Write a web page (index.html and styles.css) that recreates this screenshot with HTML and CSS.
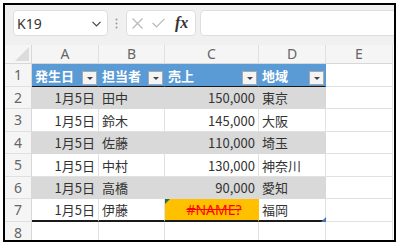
FILE: index.html
```html
<!DOCTYPE html>
<html>
<head>
<title>K19</title>
<link rel="stylesheet" href="styles.css">
</head>
<body>
<div class="frame">
  <div class="fbar">
    <div class="namebox">
      <span class="ref">K19</span>
      <svg class="chev" width="9" height="6" viewBox="0 0 9 6"><polyline points="0.5,0.8 4.5,4.8 8.5,0.8" fill="none" stroke="#444" stroke-width="1.2"/></svg>
    </div>
    <svg class="grip" width="3" height="11" viewBox="0 0 3 11"><circle cx="1.5" cy="1.5" r="1" fill="#999"/><circle cx="1.5" cy="5.5" r="1" fill="#999"/><circle cx="1.5" cy="9.5" r="1" fill="#999"/></svg>
    <div class="fxbox">
      <svg width="11" height="11" viewBox="0 0 11 11"><path d="M0.5 0.5L10.5 10.5M10.5 0.5L0.5 10.5" stroke="#b8b8b8" stroke-width="1.2"/></svg>
      <svg width="13" height="10" viewBox="0 0 13 10"><polyline points="0.5,5 4.5,9 12.5,0.8" fill="none" stroke="#b8b8b8" stroke-width="1.2"/></svg>
      <span class="fx">fx</span>
    </div>
    <div class="input"></div>
  </div>

  <div class="sheet">
    <div class="corner"><span class="tri"></span></div>
    <div class="ch">A</div><div class="ch">B</div><div class="ch">C</div><div class="ch">D</div><div class="ch">E</div>

    <div class="rh">1</div>
    <div class="c th">発生日<span class="btn"></span></div>
    <div class="c th">担当者<span class="btn"></span></div>
    <div class="c th">売上<span class="btn"></span></div>
    <div class="c th">地域<span class="btn"></span></div>
    <div class="c"></div>

    <div class="rh">2</div>
    <div class="c band r">1月5日</div><div class="c band">田中</div><div class="c band r">150,000</div><div class="c band">東京</div><div class="c"></div>

    <div class="rh">3</div>
    <div class="c r">1月5日</div><div class="c">鈴木</div><div class="c r">145,000</div><div class="c">大阪</div><div class="c"></div>

    <div class="rh">4</div>
    <div class="c band r">1月5日</div><div class="c band">佐藤</div><div class="c band r">110,000</div><div class="c band">埼玉</div><div class="c"></div>

    <div class="rh">5</div>
    <div class="c r">1月5日</div><div class="c">中村</div><div class="c r">130,000</div><div class="c">神奈川</div><div class="c"></div>

    <div class="rh">6</div>
    <div class="c band r">1月5日</div><div class="c band">高橋</div><div class="c band r">90,000</div><div class="c band">愛知</div><div class="c"></div>

    <div class="rh">7</div>
    <div class="c last r">1月5日</div><div class="c last">伊藤</div><div class="c last err"><span class="flag"></span>#NAME?</div><div class="c last">福岡<span class="grab"></span></div><div class="c"></div>

    <div class="rh">8</div>
    <div class="c"></div><div class="c"></div><div class="c"></div><div class="c"></div><div class="c"></div>
  </div>
</div>
</body>
</html>
```

FILE: styles.css
```css
body { margin: 0; background: #fff; font-family: "Noto Sans CJK JP", sans-serif; }

.frame { margin: 3px; width: 393px; height: 239px; box-sizing: border-box; border: 2px solid #000; overflow: hidden; background: #fff; }

/* formula bar */
.fbar { height: 40px; box-sizing: border-box; padding: 5px 0 0 8px; background: #f0f0f0; display: flex; align-items: flex-start; }
.namebox { width: 95px; height: 26px; box-sizing: border-box; border: 1px solid #dedede; border-radius: 4px; background: #fff;
           display: flex; align-items: center; padding: 0 6px 0 3px; }
.ref { font-family: "Noto Sans", sans-serif; font-size: 14px; color: #333; flex: 1; }
.chev { margin-top: 1px; }
.grip { margin: 8px 8px 0 7px; }
.fxbox { width: 70px; height: 26px; box-sizing: border-box; border: 1px solid #dedede; border-radius: 4px; background: #fff;
         display: flex; align-items: center; padding-left: 5px; gap: 9px; }
.fx { font-family: "Liberation Serif", serif; font-style: italic; font-weight: bold; font-size: 16px; color: #333; margin-left: 1px; }
.input { flex: 1; height: 26px; box-sizing: border-box; margin: 0 -12px 0 4px; border: 1px solid #dedede; border-radius: 4px; background: #fff; }

/* grid */
.sheet { display: grid; grid-template-columns: 27px 67px 66px 94px 67px 67px;
         grid-template-rows: 19px 23px 22px 23px 22px 23px 22px 23px 22px; }
.corner { background: #f5f5f5; border-right: 1px solid #d8d8d8; border-bottom: 1px solid #d8d8d8; position: relative; }
.tri { position: absolute; right: 2px; bottom: 2px; width: 0; height: 0; border-left: 14px solid transparent; border-bottom: 14px solid #dcdcdc; }
.ch { background: #f5f5f5; border-right: 1px solid #e0e0e0; border-bottom: 1px solid #d8d8d8;
      font-family: "Noto Sans", sans-serif; font-size: 14px; color: #666; text-align: center; line-height: 18px; }
.rh { background: #f5f5f5; border-right: 1px solid #d8d8d8; border-bottom: 1px solid #e0e0e0;
      font-family: "Noto Sans", sans-serif; font-size: 14px; color: #666; text-align: center; line-height: 22px; }

.c { box-sizing: border-box; border-right: 1px solid #e1e1e1; border-bottom: 1px solid #e1e1e1;
     font-size: 13px; color: #333; padding: 0 3px; display: flex; align-items: center; white-space: nowrap; position: relative; }
.r { justify-content: flex-end; }
.band { background: #d9d9d9; border-color: transparent; }
.th { background: #5b9bd5; border-right-color: transparent; border-bottom: 1px solid #1a1a1a; color: #fff; font-weight: bold; }
.btn { position: absolute; right: 1px; bottom: 1px; width: 15px; height: 14px; box-sizing: border-box; background: #f4f4f4; border: 1px solid #a9a9a9; }
.btn::after { content: ""; position: absolute; left: 4px; top: 5px; border-left: 3px solid transparent; border-right: 3px solid transparent; border-top: 3px solid #444; }
.last { border-bottom: 2px solid #1a1a1a; }
.err { background: #ffc000; justify-content: center; color: #f00; text-decoration: line-through; font-family: "Noto Sans", sans-serif;
       font-size: 14px; font-weight: normal; padding-left: 8px; border-right-color: transparent; }
.flag { position: absolute; left: 0; top: 0; border-top: 5px solid #217346; border-right: 5px solid transparent; }
.grab { position: absolute; right: -1px; bottom: -2px; border-bottom: 5px solid #4472c4; border-left: 5px solid transparent; }
```
